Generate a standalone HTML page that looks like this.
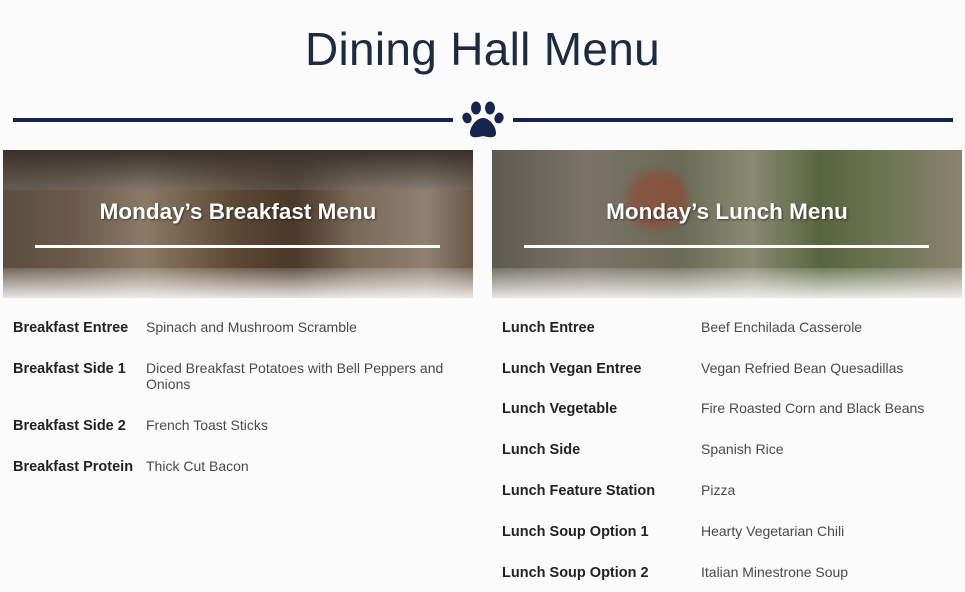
<!DOCTYPE html>
<html><head><style>
body{margin:0;width:965px;height:592px;background:#fbfbfb;position:relative;overflow:hidden;font-family:"Liberation Sans",sans-serif}
.t{position:absolute;left:0;width:965px;top:22px;text-align:center;font-size:46px;color:#1c2a42;font-weight:normal;letter-spacing:0.3px}
.ln{position:absolute;top:118px;height:4px;background:#14264d}
.panel{position:absolute;top:150px;width:470px;height:148px;overflow:hidden}
.hd{position:absolute;top:49px;left:0;right:0;text-align:center;color:#fff;font-weight:bold;font-size:22.5px;text-shadow:1px 1px 2px rgba(0,0,0,.5)}
.wl{position:absolute;top:95px;left:32px;width:405px;height:3px;background:#fff}
.fade{position:absolute;left:0;right:0;bottom:0;height:30px;background:linear-gradient(rgba(255,255,255,.15),rgba(255,255,255,.85))}
.l,.v{position:absolute;font-size:14px}
.l{font-weight:bold;color:#222;font-size:14.5px}
.v{color:#4a4a4a;line-height:16px}
</style></head><body>
<div class="t">Dining Hall Menu</div>
<div class="ln" style="left:13px;width:440px"></div>
<div class="ln" style="left:513px;width:440px"></div>
<svg style="position:absolute;left:461px;top:100px" width="44" height="40" viewBox="0 0 44 40" fill="#14264d">
<ellipse cx="6" cy="18" rx="4.5" ry="5.5" transform="rotate(-20 6 18)"/><ellipse cx="15" cy="8" rx="5" ry="6.5"/><ellipse cx="29" cy="8" rx="5" ry="6.5"/><ellipse cx="38" cy="18" rx="4.5" ry="5.5" transform="rotate(20 38 18)"/>
<path d="M22 18c-7 0-13 9-13 15 0 5 6 5 13 3 7 2 13 2 13-3 0-6-6-15-13-15z"/></svg>
<div class="panel" style="left:3px;background:linear-gradient(90deg,#5a4d42 0%,#6b5a4a 15%,#8a7a66 30%,#5b4734 50%,#4a3828 62%,#7a6a58 75%,#8f8070 90%,#6a5848 100%)">
<div style="position:absolute;left:0;right:0;top:0;height:40px;background:linear-gradient(#3a302a,rgba(120,120,120,.3))"></div>
<div class="hd">Monday’s Breakfast Menu</div><div class="wl"></div><div class="fade"></div></div>
<div class="panel" style="left:492px;background:linear-gradient(90deg,#5d5a50 0%,#7a7468 20%,#6b6a56 40%,#8a8a72 55%,#59653f 70%,#6f7655 85%,#8a8470 100%)">
<div style="position:absolute;left:135px;top:20px;width:60px;height:60px;border-radius:50%;background:rgba(170,50,30,.4);filter:blur(4px)"></div>
<div class="hd">Monday’s Lunch Menu</div><div class="wl"></div><div class="fade"></div></div>

<div class="l" style="left:13px;top:320px">Breakfast Entree</div><div class="v" style="left:146px;top:319px">Spinach and Mushroom Scramble</div>
<div class="l" style="left:13px;top:361px">Breakfast Side 1</div><div class="v" style="left:146px;top:360px;width:320px">Diced Breakfast Potatoes with Bell Peppers and Onions</div>
<div class="l" style="left:13px;top:418px">Breakfast Side 2</div><div class="v" style="left:146px;top:417px">French Toast Sticks</div>
<div class="l" style="left:13px;top:459px">Breakfast Protein</div><div class="v" style="left:146px;top:458px">Thick Cut Bacon</div>

<div class="l" style="left:502px;top:320px">Lunch Entree</div><div class="v" style="left:701px;top:319px">Beef Enchilada Casserole</div>
<div class="l" style="left:502px;top:361px">Lunch Vegan Entree</div><div class="v" style="left:701px;top:360px">Vegan Refried Bean Quesadillas</div>
<div class="l" style="left:502px;top:401px">Lunch Vegetable</div><div class="v" style="left:701px;top:400px">Fire Roasted Corn and Black Beans</div>
<div class="l" style="left:502px;top:442px">Lunch Side</div><div class="v" style="left:701px;top:441px">Spanish Rice</div>
<div class="l" style="left:502px;top:483px">Lunch Feature Station</div><div class="v" style="left:701px;top:482px">Pizza</div>
<div class="l" style="left:502px;top:524px">Lunch Soup Option 1</div><div class="v" style="left:701px;top:523px">Hearty Vegetarian Chili</div>
<div class="l" style="left:502px;top:565px">Lunch Soup Option 2</div><div class="v" style="left:701px;top:564px">Italian Minestrone Soup</div>
</body></html>
